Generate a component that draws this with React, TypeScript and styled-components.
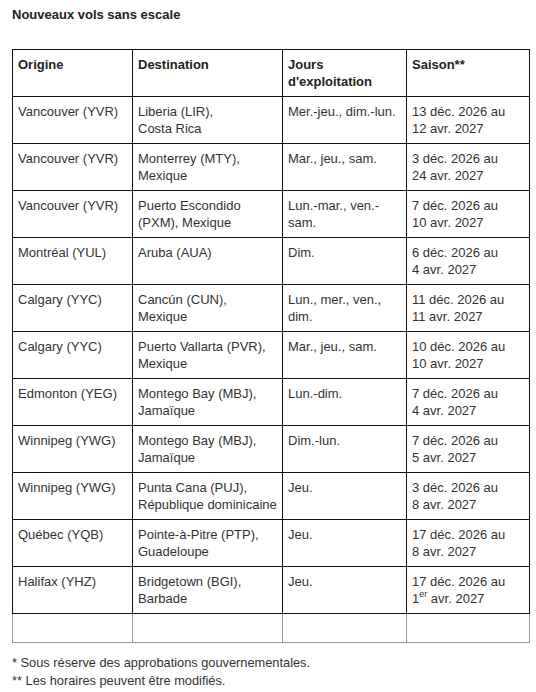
import React from 'react'
import styled, { createGlobalStyle } from 'styled-components'

const GlobalStyle = createGlobalStyle`
  html, body {
    margin: 0;
    padding: 0;
    background: #fff;
  }
  body {
    font-family: 'Liberation Sans', Arial, sans-serif;
    color: #333;
  }
`

const Page = styled.div`
  padding: 6px 7px 0 12px;
  width: 536px;
  box-sizing: border-box;
`

const Title = styled.h3`
  margin: 0 0 26px;
  font-size: 13px;
  line-height: 17px;
  font-weight: bold;
  color: #222;
`

const Table = styled.table`
  border-collapse: collapse;
  table-layout: fixed;
  width: 517px;
  font-size: 13px;
  line-height: 17px;
  color: #333;
`

const Row = styled.tr<{ $empty?: boolean }>`
  height: ${(p) => (p.$empty ? '29px' : '47px')};
`

const HeadCell = styled.th`
  border: 1px solid #111;
  padding: 6px 5px 4px;
  text-align: left;
  vertical-align: top;
  font-weight: bold;
  color: #222;
`

const Cell = styled.td<{ $empty?: boolean }>`
  border: 1px solid ${(p) => (p.$empty ? '#999' : '#111')};
  padding: 6px 5px 4px;
  vertical-align: top;
`

const Line = styled.span`
  display: block;
  white-space: nowrap;
`

const Sup = styled.sup`
  font-size: 9px;
  line-height: 0;
  vertical-align: 6px;
`

const Notes = styled.div`
  margin-top: 11px;
  font-size: 12.8px;
  line-height: 18px;
  color: #333;
  p {
    margin: 0;
  }
`

type Text = React.ReactNode[]
type Flight = [Text, Text, Text, Text]

const flights: Flight[] = [
  [['Vancouver (YVR)'], ['Liberia (LIR),', 'Costa Rica'], ['Mer.-jeu., dim.-lun.'], ['13 déc. 2026 au', '12 avr. 2027']],
  [['Vancouver (YVR)'], ['Monterrey (MTY),', 'Mexique'], ['Mar., jeu., sam.'], ['3 déc. 2026 au', '24 avr. 2027']],
  [['Vancouver (YVR)'], ['Puerto Escondido', '(PXM), Mexique'], ['Lun.-mar., ven.-', 'sam.'], ['7 déc. 2026 au', '10 avr. 2027']],
  [['Montréal (YUL)'], ['Aruba (AUA)'], ['Dim.'], ['6 déc. 2026 au', '4 avr. 2027']],
  [['Calgary (YYC)'], ['Cancún (CUN),', 'Mexique'], ['Lun., mer., ven.,', 'dim.'], ['11 déc. 2026 au', '11 avr. 2027']],
  [['Calgary (YYC)'], ['Puerto Vallarta (PVR),', 'Mexique'], ['Mar., jeu., sam.'], ['10 déc. 2026 au', '10 avr. 2027']],
  [['Edmonton (YEG)'], ['Montego Bay (MBJ),', 'Jamaïque'], ['Lun.-dim.'], ['7 déc. 2026 au', '4 avr. 2027']],
  [['Winnipeg (YWG)'], ['Montego Bay (MBJ),', 'Jamaïque'], ['Dim.-lun.'], ['7 déc. 2026 au', '5 avr. 2027']],
  [['Winnipeg (YWG)'], ['Punta Cana (PUJ),', 'République dominicaine'], ['Jeu.'], ['3 déc. 2026 au', '8 avr. 2027']],
  [['Québec (YQB)'], ['Pointe-à-Pitre (PTP),', 'Guadeloupe'], ['Jeu.'], ['17 déc. 2026 au', '8 avr. 2027']],
  [
    ['Halifax (YHZ)'],
    ['Bridgetown (BGI),', 'Barbade'],
    ['Jeu.'],
    [
      '17 déc. 2026 au',
      <>
        1<Sup>er</Sup> avr. 2027
      </>,
    ],
  ],
]

export default function App() {
  return (
    <>
      <GlobalStyle />
      <Page>
        <Title>Nouveaux vols sans escale</Title>
        <Table>
          <colgroup>
            <col style={{ width: 120 }} />
            <col style={{ width: 150 }} />
            <col style={{ width: 124 }} />
            <col style={{ width: 123 }} />
          </colgroup>
          <thead>
            <Row>
              <HeadCell>Origine</HeadCell>
              <HeadCell>Destination</HeadCell>
              <HeadCell>
                <Line>Jours</Line>
                <Line>d'exploitation</Line>
              </HeadCell>
              <HeadCell>Saison**</HeadCell>
            </Row>
          </thead>
          <tbody>
            {flights.map((f, i) => (
              <Row key={i}>
                {f.map((lines, j) => (
                  <Cell key={j}>
                    {lines.map((l, k) => (
                      <Line key={k}>{l}</Line>
                    ))}
                  </Cell>
                ))}
              </Row>
            ))}
            <Row $empty>
              <Cell $empty />
              <Cell $empty />
              <Cell $empty />
              <Cell $empty />
            </Row>
          </tbody>
        </Table>
        <Notes>
          <p>* Sous réserve des approbations gouvernementales.</p>
          <p>** Les horaires peuvent être modifiés.</p>
        </Notes>
      </Page>
    </>
  )
}
